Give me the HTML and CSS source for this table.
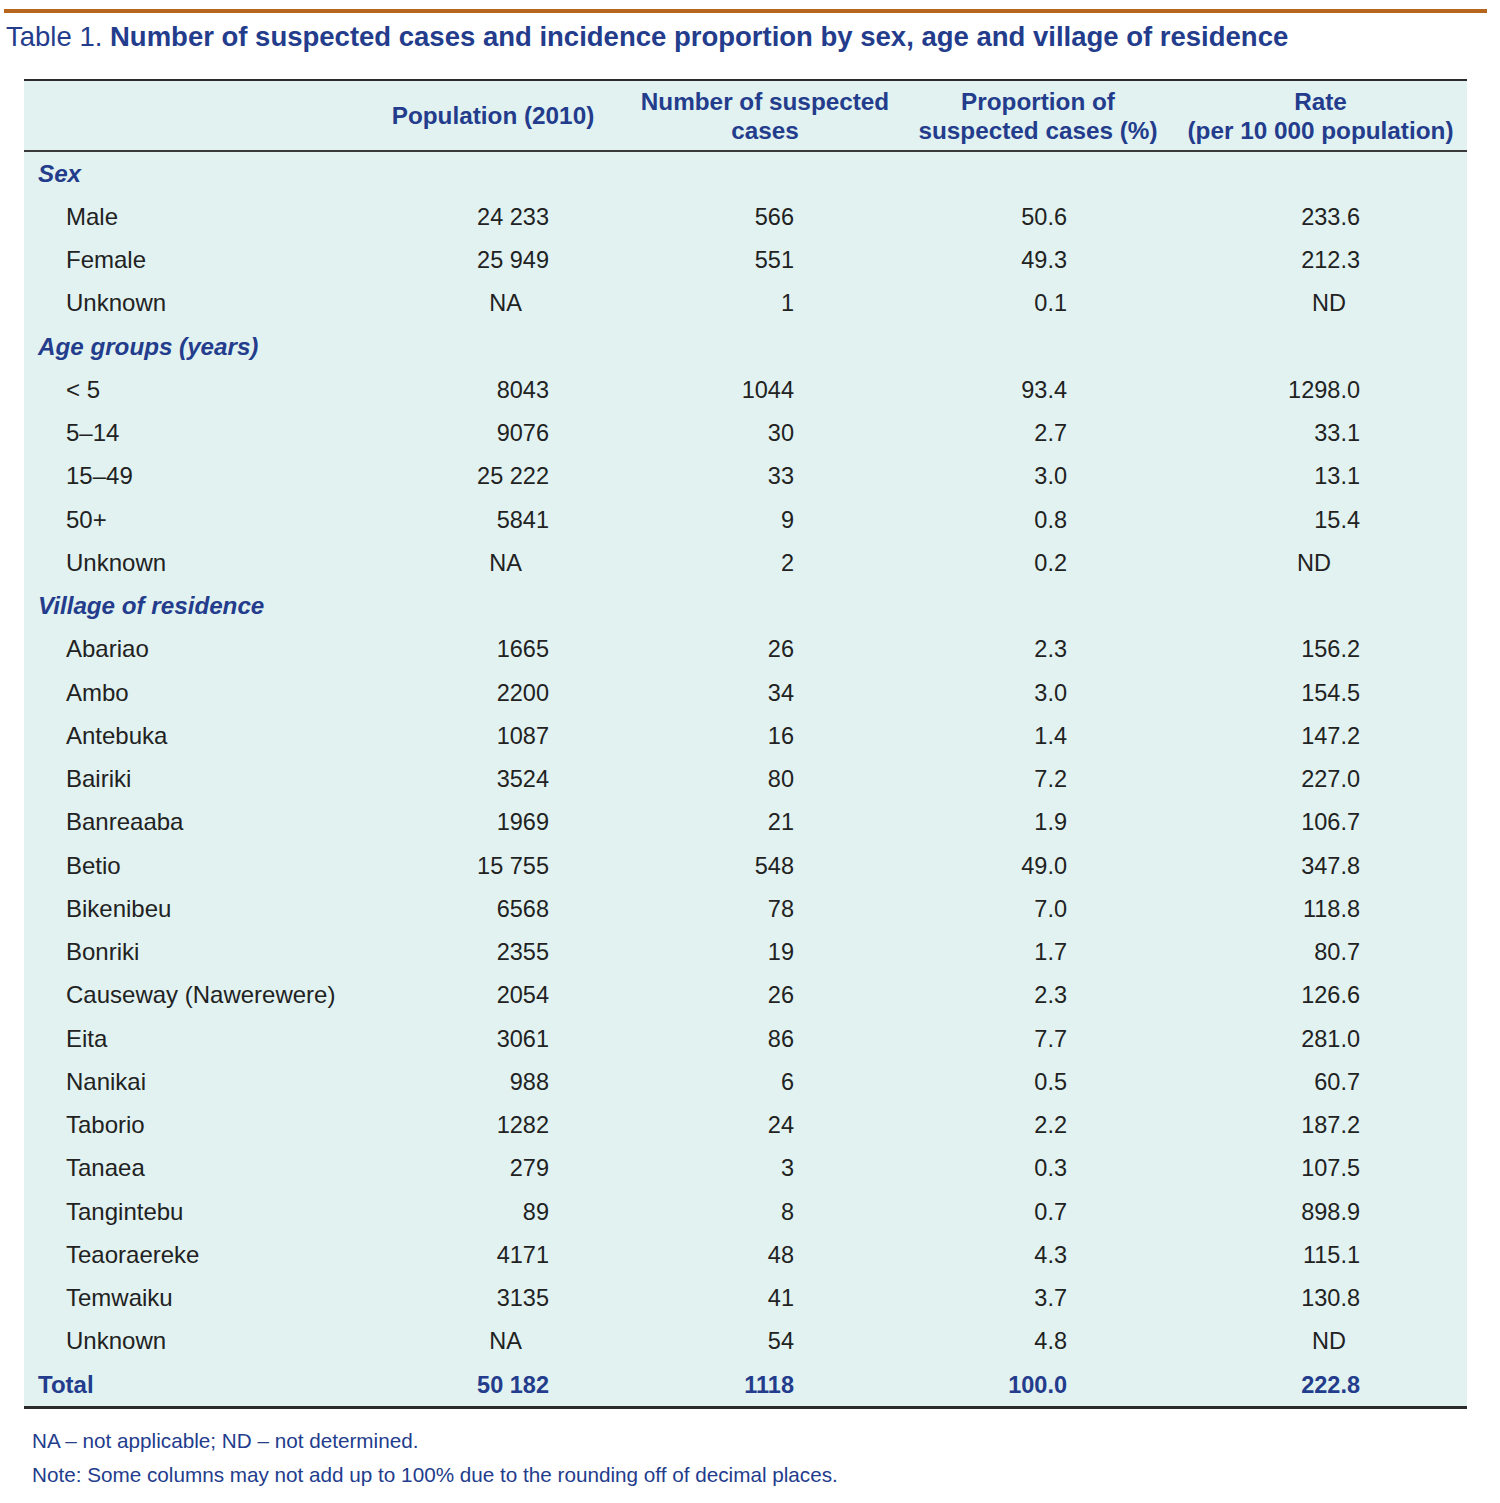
FILE: index.html
```html
<!DOCTYPE html>
<html lang="en">
<head>
<meta charset="utf-8">
<title>Table 1</title>
<link rel="stylesheet" href="styles.css">
</head>
<body>
<div class="page">
  <div class="rule"></div>
  <h1 class="title"><span class="title-num">Table 1.</span> Number of suspected cases and incidence proportion by sex, age and village of residence</h1>
  <table class="data">
    <colgroup>
      <col class="c1"><col class="c2"><col class="c3"><col class="c4"><col class="c5">
    </colgroup>
    <thead>
      <tr>
        <th></th>
        <th>Population (2010)</th>
        <th>Number of suspected<br>cases</th>
        <th>Proportion of<br>suspected cases (%)</th>
        <th class="h5">Rate<br>(per 10 000 population)</th>
      </tr>
    </thead>
    <tbody>
      <tr class="sec"><td colspan="5">Sex</td></tr>
      <tr><td>Male</td><td>24 233</td><td>566</td><td>50.6</td><td>233.6</td></tr>
      <tr><td>Female</td><td>25 949</td><td>551</td><td>49.3</td><td>212.3</td></tr>
      <tr><td>Unknown</td><td class="na">NA</td><td>1</td><td>0.1</td><td class="nd">ND</td></tr>
      <tr class="sec"><td colspan="5">Age groups (years)</td></tr>
      <tr><td>&lt; 5</td><td>8043</td><td>1044</td><td>93.4</td><td>1298.0</td></tr>
      <tr><td>5–14</td><td>9076</td><td>30</td><td>2.7</td><td>33.1</td></tr>
      <tr><td>15–49</td><td>25 222</td><td>33</td><td>3.0</td><td>13.1</td></tr>
      <tr><td>50+</td><td>5841</td><td>9</td><td>0.8</td><td>15.4</td></tr>
      <tr><td>Unknown</td><td class="na">NA</td><td>2</td><td>0.2</td><td class="nd nd2">ND</td></tr>
      <tr class="sec"><td colspan="5">Village of residence</td></tr>
      <tr><td>Abariao</td><td>1665</td><td>26</td><td>2.3</td><td>156.2</td></tr>
      <tr><td>Ambo</td><td>2200</td><td>34</td><td>3.0</td><td>154.5</td></tr>
      <tr><td>Antebuka</td><td>1087</td><td>16</td><td>1.4</td><td>147.2</td></tr>
      <tr><td>Bairiki</td><td>3524</td><td>80</td><td>7.2</td><td>227.0</td></tr>
      <tr><td>Banreaaba</td><td>1969</td><td>21</td><td>1.9</td><td>106.7</td></tr>
      <tr><td>Betio</td><td>15 755</td><td>548</td><td>49.0</td><td>347.8</td></tr>
      <tr><td>Bikenibeu</td><td>6568</td><td>78</td><td>7.0</td><td>118.8</td></tr>
      <tr><td>Bonriki</td><td>2355</td><td>19</td><td>1.7</td><td>80.7</td></tr>
      <tr><td>Causeway (Nawerewere)</td><td>2054</td><td>26</td><td>2.3</td><td>126.6</td></tr>
      <tr><td>Eita</td><td>3061</td><td>86</td><td>7.7</td><td>281.0</td></tr>
      <tr><td>Nanikai</td><td>988</td><td>6</td><td>0.5</td><td>60.7</td></tr>
      <tr><td>Taborio</td><td>1282</td><td>24</td><td>2.2</td><td>187.2</td></tr>
      <tr><td>Tanaea</td><td>279</td><td>3</td><td>0.3</td><td>107.5</td></tr>
      <tr><td>Tangintebu</td><td>89</td><td>8</td><td>0.7</td><td>898.9</td></tr>
      <tr><td>Teaoraereke</td><td>4171</td><td>48</td><td>4.3</td><td>115.1</td></tr>
      <tr><td>Temwaiku</td><td>3135</td><td>41</td><td>3.7</td><td>130.8</td></tr>
      <tr><td>Unknown</td><td class="na">NA</td><td>54</td><td>4.8</td><td class="nd">ND</td></tr>
      <tr class="total"><td>Total</td><td>50 182</td><td>1118</td><td>100.0</td><td>222.8</td></tr>
    </tbody>
  </table>
  <p class="note note-first">NA – not applicable; ND – not determined.</p>
  <p class="note">Note: Some columns may not add up to 100% due to the rounding off of decimal places.</p>
</div>
</body>
</html>
```

FILE: styles.css
```css
html, body {
  margin: 0;
  padding: 0;
  background: #ffffff;
}

.page {
  width: 1500px;
  font-family: "Liberation Sans", Arial, sans-serif;
}

.rule {
  height: 4px;
  background: #b8661e;
  margin: 9px 13px 0 4px;
}

.title {
  margin: 6px 0 0 6px;
  font-family: "Liberation Sans", Arial, sans-serif;
  font-size: 27.5px;
  line-height: 36px;
  font-weight: 700;
  color: #233c8c;
  white-space: nowrap;
}

.title-num {
  font-weight: 400;
}

.data {
  margin: 24px 0 0 24px;
  width: 1443px;
  border-collapse: collapse;
  table-layout: fixed;
  background: #e1f2f1;
  border-top: 2px solid #2b2b2b;
  border-bottom: 3px solid #2b2b2b;
}

.c1 { width: 346px; }
.c2 { width: 246px; }
.c3 { width: 298px; }
.c4 { width: 248px; }
.c5 { width: 305px; }

.data th {
  height: 69px;
  padding: 0;
  font-size: 24.3px;
  line-height: 29px;
  font-weight: 700;
  color: #233c8c;
  text-align: center;
  vertical-align: middle;
  border-bottom: 2px solid #3a3a3a;
  white-space: nowrap;
}

.data th.h5 {
  padding-left: 12px;
}

.data td {
  height: 43.25px;
  padding: 0;
  font-size: 23.5px;
  line-height: 28px;
  color: #222222;
  vertical-align: middle;
  text-align: right;
  white-space: nowrap;
}

.data td:nth-child(1) { text-align: left; padding-left: 42px; font-size: 24px; }
.data td:nth-child(2) { padding-right: 67px; }
.data td:nth-child(3) { padding-right: 120px; }
.data td:nth-child(4) { padding-right: 95px; }
.data td:nth-child(5) { padding-right: 107px; }

.data td.na { padding-right: 94px; }
.data td.nd { padding-right: 121px; }
.data td.nd2 { padding-right: 136px; }

.data tr.sec td {
  padding-left: 14px;
  text-align: left;
  font-size: 24.2px;
  font-weight: 700;
  font-style: italic;
  color: #233c8c;
}

.data tr.total td {
  font-weight: 700;
  color: #233c8c;
}

.data tr.total td:nth-child(1) { padding-left: 14px; }

.note {
  margin: 0 0 0 32px;
  font-size: 20.7px;
  line-height: 34px;
  color: #233c8c;
}

.note-first {
  margin-top: 15px;
}
```
